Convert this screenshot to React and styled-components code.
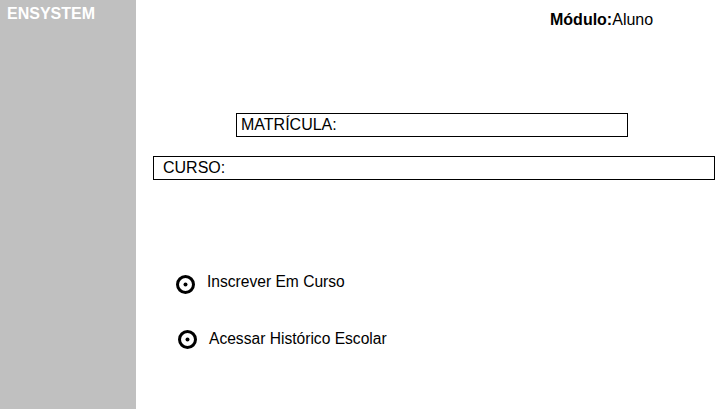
import React from 'react';
import styled, { createGlobalStyle } from 'styled-components';

const GlobalStyle = createGlobalStyle`
  html, body {
    margin: 0;
    padding: 0;
    background: #ffffff;
  }
  body {
    font-family: "Liberation Sans", Arial, sans-serif;
    color: #000;
  }
`;

const Page = styled.div`
  display: flex;
  width: 725px;
  height: 409px;
  overflow: hidden;
`;

const Sidebar = styled.aside`
  width: 136px;
  flex-shrink: 0;
  background: #c0c0c0;
  padding: 5px 0 0 7px;
  box-sizing: border-box;
`;

const Brand = styled.div`
  color: #fff;
  font-weight: bold;
  font-size: 16px;
  line-height: 18px;
`;

const Main = styled.main`
  flex: 1;
  display: flex;
  flex-direction: column;
`;

const Header = styled.div`
  padding: 11px 0 0 414px;
  font-size: 16px;
  line-height: 18px;
  b {
    font-weight: bold;
  }
`;

const Field = styled.div`
  box-sizing: border-box;
  margin-top: ${(p) => p.$top}px;
  margin-left: ${(p) => p.$left}px;
  width: ${(p) => p.$width}px;
  height: 24px;
  border: 1px solid #000;
  padding-left: ${(p) => p.$pad}px;
  font-size: 16px;
  line-height: 22px;
`;

const Options = styled.div`
  display: flex;
  flex-direction: column;
  gap: 34px;
  margin-top: 89px;
`;

const Option = styled.div`
  display: flex;
  align-items: center;
  gap: 12px;
  margin-left: ${(p) => p.$left}px;
  font-size: 15.6px;
  line-height: 20px;
  svg {
    flex-shrink: 0;
    margin-top: ${(p) => p.$iconShift}px;
  }
`;

function Radio() {
  return (
    <svg width="19" height="19" viewBox="0 0 19 19">
      <circle cx="9.5" cy="9.5" r="8" fill="none" stroke="#000" strokeWidth="3" />
      <circle cx="9.5" cy="9.5" r="2" fill="#000" />
    </svg>
  );
}

export default function App() {
  return (
    <>
      <GlobalStyle />
      <Page>
        <Sidebar>
          <Brand>ENSYSTEM</Brand>
        </Sidebar>
        <Main>
          <Header>
            <b>Módulo:</b>Aluno
          </Header>
          <Field $top={84} $left={100} $width={392} $pad={4}>
            MATRÍCULA:
          </Field>
          <Field $top={19} $left={17} $width={562} $pad={9}>
            CURSO:
          </Field>
          <Options>
            <Option $left={40} $iconShift={6}>
              <Radio />
              Inscrever Em Curso
            </Option>
            <Option $left={42} $iconShift={2}>
              <Radio />
              Acessar Histórico Escolar
            </Option>
          </Options>
        </Main>
      </Page>
    </>
  );
}
